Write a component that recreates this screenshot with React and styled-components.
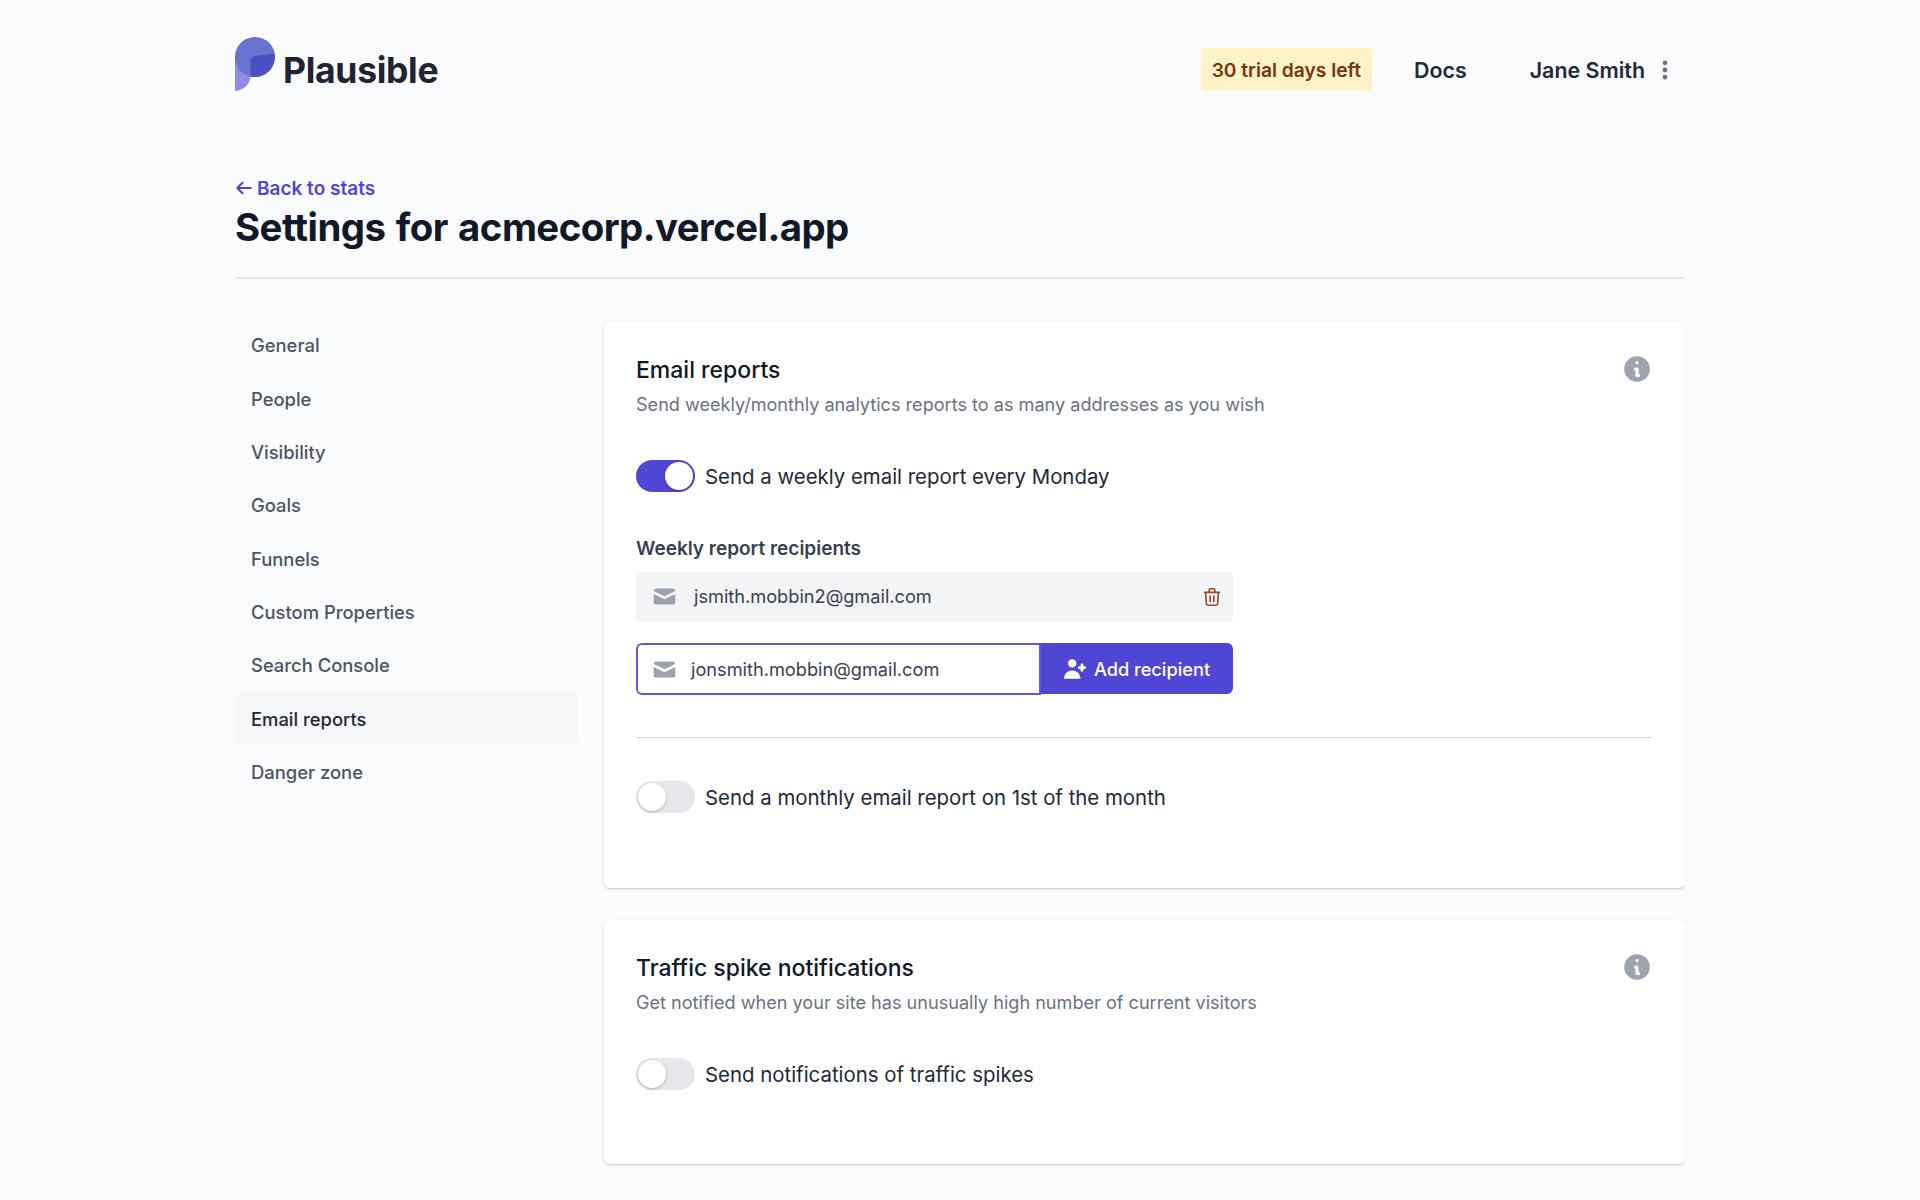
import React from "react";
import styled, { createGlobalStyle } from "styled-components";

const GlobalStyle = createGlobalStyle`
  html, body {
    margin: 0;
    padding: 0;
    background: #fafbfd;
    font-family: "Inter", "Liberation Sans", sans-serif;
    color: #1f2937;
  }
  * { box-sizing: border-box; }
`;

const Page = styled.div`
  width: 1450px;
  margin-left: 235px;
  height: 1200px;
  overflow: hidden;
`;

const Header = styled.header`
  height: 139px;
  padding-top: 37px;
  display: flex;
  justify-content: space-between;
  align-items: flex-start;
`;

const Brand = styled.div`
  display: flex;
  align-items: flex-start;
  gap: 7px;
`;

const BrandName = styled.span`
  font-size: 35.5px;
  font-weight: 700;
  line-height: 42px;
  margin-top: 13px;
  color: #1f2333;
  letter-spacing: -0.3px;
`;

const Nav = styled.nav`
  display: flex;
  align-items: center;
  height: 44px;
  margin-top: 11px;
  font-size: 21.4px;
  font-weight: 600;
  color: #1f2937;
`;

const TrialBadge = styled.span`
  height: 43px;
  margin-top: -1px;
  padding: 0 11px;
  display: flex;
  align-items: center;
  background: #fef3c7;
  color: #78350f;
  border-radius: 3px;
  font-size: 19.2px;
  font-weight: 600;
`;

const DocsLink = styled.span`
  margin-left: 42px;
`;

const UserName = styled.span`
  margin-left: 63px;
`;

const MenuDots = styled.svg`
  width: 24px;
  height: 24px;
  margin-left: 8px;
  margin-right: 8px;
  fill: #6b7280;
`;

const TitleBlock = styled.div`
  height: 140px;
  padding-top: 37px;
  border-bottom: 2px solid #e5e7eb;
`;

const BackLink = styled.a`
  display: flex;
  align-items: center;
  gap: 4px;
  height: 24px;
  font-size: 19px;
  font-weight: 600;
  color: #4f46d5;
  svg {
    width: 18px;
    height: 18px;
  }
`;

const Heading = styled.h1`
  margin: 2px 0 0;
  font-size: 38.4px;
  line-height: 50px;
  font-weight: 700;
  letter-spacing: -0.55px;
  word-spacing: 1.8px;
  color: #111827;
`;

const Body = styled.div`
  display: flex;
  gap: 26px;
  padding-top: 43px;
`;

const Sidebar = styled.ul`
  list-style: none;
  margin: -2px 0 0;
  padding: 0;
  width: 343px;
  flex: none;
  display: flex;
  flex-direction: column;
  gap: 3px;
`;

const SideItem = styled.li`
  height: 50.35px;
  padding: 0 16px;
  display: flex;
  align-items: center;
  font-size: 18.4px;
  font-weight: 500;
  border-radius: 6px;
  color: ${(p) => (p.$active ? "#1f2937" : "#4b5563")};
  background: ${(p) => (p.$active ? "#f5f6f8" : "transparent")};
`;

const Cards = styled.div`
  flex: 1;
  display: flex;
  flex-direction: column;
  gap: 32px;
`;

const Card = styled.section`
  position: relative;
  background: #fff;
  border-radius: 6px;
  height: ${(p) => p.$height}px;
  padding: 32px;
  box-shadow: 0 1px 3px rgba(0, 0, 0, 0.14), 0 1px 2px rgba(0, 0, 0, 0.08);
`;

const CardHead = styled.div`
  display: flex;
  justify-content: space-between;
  align-items: flex-start;
`;

const CardTitle = styled.h2`
  margin: 0;
  font-size: 23px;
  line-height: 32px;
  font-weight: 500;
  color: #111827;
`;

const CardSub = styled.p`
  margin: 4px 0 0;
  font-size: 18.1px;
  line-height: 28px;
  color: #6b7280;
`;

const InfoIcon = styled.svg`
  width: 32px;
  height: 32px;
  fill: #9ca3af;
  margin: -1px 0 0;
`;

const ToggleRow = styled.div`
  display: flex;
  align-items: center;
  gap: 10px;
  height: 32px;
  margin-top: ${(p) => p.$top}px;
`;

const Track = styled.span`
  position: relative;
  width: 59px;
  height: 32px;
  border-radius: 16px;
  background: ${(p) => (p.$on ? "#4f46d5" : "#e5e7eb")};
  flex: none;
`;

const Knob = styled.span`
  position: absolute;
  top: 2px;
  left: ${(p) => (p.$on ? "29px" : "2px")};
  width: 28px;
  height: 28px;
  border-radius: 50%;
  background: #fff;
  box-shadow: 0 1px 3px rgba(0, 0, 0, 0.25);
`;

const ToggleLabel = styled.span`
  font-size: 20.4px;
  color: #1f2937;
`;

const FieldLabel = styled.div`
  margin-top: 45px;
  font-size: 19px;
  line-height: 24px;
  font-weight: 600;
  color: #374151;
`;

const Recipient = styled.div`
  width: 597px;
  height: 49px;
  margin-top: 11px;
  padding: 0 10px 0 15px;
  display: flex;
  align-items: center;
  background: #f3f4f6;
  border-radius: 4px;
  font-size: 18.2px;
  color: #374151;
`;

const MailIcon = styled.svg`
  width: 27px;
  height: 27px;
  fill: #9ca3af;
  flex: none;
`;

const Address = styled.span`
  flex: 1;
  margin: 0 0 1px 16px;
`;

const TrashIcon = styled.svg`
  width: 22px;
  height: 22px;
  fill: none;
  stroke: #9a4a2c;
  stroke-width: 1.8;
  stroke-linecap: round;
  stroke-linejoin: round;
`;

const AddRow = styled.div`
  display: flex;
  width: 597px;
  margin-top: 22px;
`;

const InputBox = styled.div`
  width: 405px;
  height: 52px;
  padding: 0 12px 0 13px;
  display: flex;
  align-items: center;
  background: #fff;
  border: 2.5px solid #5f58dc;
  border-radius: 6px 0 0 6px;
  font-size: 18.2px;
  color: #374151;
`;

const InputText = styled.span`
  margin: 0 0 1px 13px;
`;

const AddButton = styled.button`
  flex: 1;
  height: 51px;
  padding: 0 3px 0 0;
  border: none;
  border-radius: 0 6px 6px 0;
  background: #4f46d5;
  color: #fff;
  font-family: inherit;
  font-size: 18.2px;
  font-weight: 500;
  display: flex;
  align-items: center;
  justify-content: center;
  gap: 5px;
  svg {
    width: 28px;
    height: 28px;
    fill: #fff;
  }
`;

const Rule = styled.hr`
  margin: 42px 0 0;
  border: none;
  border-top: 1px solid #d1d5db;
`;

const Logo = () => (
  <svg width="41" height="55" viewBox="0 0 41 55">
    <path d="M0 20 V54 C9 53 15 47 15.5 40 V20 Z" fill="#8f8ce6" />
    <circle cx="20" cy="20" r="20" fill="#6a72cf" />
    <path d="M15.5 39.5 V24 A5 5 0 0 1 20.5 19 L39.4 16.5 A20 20 0 0 1 15.5 39.5 Z" fill="#4a4fc4" />
  </svg>
);

const Mail = () => (
  <MailIcon viewBox="0 0 20 20">
    <path d="M2.003 5.884L10 9.882l7.997-3.998A2 2 0 0016 4H4a2 2 0 00-1.997 1.884z" />
    <path d="M18 8.118l-8 4-8-4V14a2 2 0 002 2h12a2 2 0 002-2V8.118z" />
  </MailIcon>
);

const Info = () => (
  <InfoIcon viewBox="0 0 20 20">
    <path
      fillRule="evenodd"
      d="M18 10a8 8 0 11-16 0 8 8 0 0116 0zm-7-4a1 1 0 11-2 0 1 1 0 012 0zM9 9a1 1 0 000 2v3a1 1 0 001 1h1a1 1 0 100-2v-3a1 1 0 00-1-1H9z"
    />
  </InfoIcon>
);

const Toggle = ({ on, label, top }) => (
  <ToggleRow $top={top}>
    <Track $on={on}>
      <Knob $on={on} />
    </Track>
    <ToggleLabel>{label}</ToggleLabel>
  </ToggleRow>
);

const menu = [
  "General",
  "People",
  "Visibility",
  "Goals",
  "Funnels",
  "Custom Properties",
  "Search Console",
  "Email reports",
  "Danger zone",
];

export default function App() {
  return (
    <Page>
      <GlobalStyle />
      <Header>
        <Brand>
          <Logo />
          <BrandName>Plausible</BrandName>
        </Brand>
        <Nav>
          <TrialBadge>30 trial days left</TrialBadge>
          <DocsLink>Docs</DocsLink>
          <UserName>Jane Smith</UserName>
          <MenuDots viewBox="0 0 20 20">
            <path d="M10 6a2 2 0 110-4 2 2 0 010 4zM10 12a2 2 0 110-4 2 2 0 010 4zM10 18a2 2 0 110-4 2 2 0 010 4z" />
          </MenuDots>
        </Nav>
      </Header>
      <TitleBlock>
        <BackLink>
          <svg viewBox="0 0 24 24" fill="none" stroke="currentColor" strokeWidth="2.8" strokeLinecap="round" strokeLinejoin="round">
            <path d="M10 19l-7-7m0 0l7-7m-7 7h18" />
          </svg>
          Back to stats
        </BackLink>
        <Heading>Settings for acmecorp.vercel.app</Heading>
      </TitleBlock>
      <Body>
        <Sidebar>
          {menu.map((item) => (
            <SideItem key={item} $active={item === "Email reports"}>
              {item}
            </SideItem>
          ))}
        </Sidebar>
        <Cards>
          <Card $height={566}>
            <CardHead>
              <div>
                <CardTitle>Email reports</CardTitle>
                <CardSub>Send weekly/monthly analytics reports to as many addresses as you wish</CardSub>
              </div>
              <Info />
            </CardHead>
            <Toggle on top={42} label="Send a weekly email report every Monday" />
            <FieldLabel>Weekly report recipients</FieldLabel>
            <Recipient>
              <Mail />
              <Address>jsmith.mobbin2@gmail.com</Address>
              <TrashIcon viewBox="0 0 24 24">
                <path d="M19 7l-.867 12.142A2 2 0 0116.138 21H7.862a2 2 0 01-1.995-1.858L5 7m5 4v6m4-6v6m1-10V4a1 1 0 00-1-1h-4a1 1 0 00-1 1v3M4 7h16" />
              </TrashIcon>
            </Recipient>
            <AddRow>
              <InputBox>
                <Mail />
                <InputText>jonsmith.mobbin@gmail.com</InputText>
              </InputBox>
              <AddButton>
                <svg viewBox="0 0 20 20">
                  <path d="M8 9a3 3 0 100-6 3 3 0 000 6zM8 11a6 6 0 016 6H2a6 6 0 016-6zM16 7a1 1 0 10-2 0v1h-1a1 1 0 100 2h1v1a1 1 0 102 0v-1h1a1 1 0 100-2h-1V7z" />
                </svg>
                Add recipient
              </AddButton>
            </AddRow>
            <Rule />
            <Toggle top={43} label="Send a monthly email report on 1st of the month" />
          </Card>
          <Card $height={244}>
            <CardHead>
              <div>
                <CardTitle>Traffic spike notifications</CardTitle>
                <CardSub>Get notified when your site has unusually high number of current visitors</CardSub>
              </div>
              <Info />
            </CardHead>
            <Toggle top={42} label="Send notifications of traffic spikes" />
          </Card>
        </Cards>
      </Body>
    </Page>
  );
}
